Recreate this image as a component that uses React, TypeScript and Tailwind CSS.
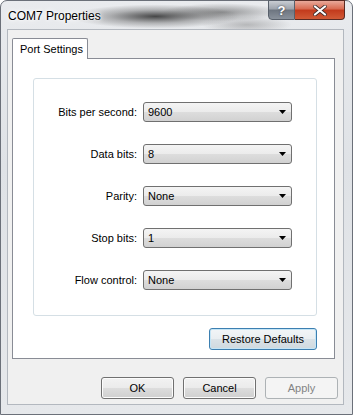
const rows = [
  { label: "Bits per second:", value: "9600" },
  { label: "Data bits:", value: "8" },
  { label: "Parity:", value: "None" },
  { label: "Stop bits:", value: "1" },
  { label: "Flow control:", value: "None" },
];

function Combo({ value }: { value: string }) {
  return (
    <div className="flex h-[20px] w-[149px] items-center justify-between rounded-[3px] border border-[#707070] bg-[linear-gradient(#f4f4f4,#ebebeb_50%,#dddddd_51%,#d1d1d1)] pl-[4px] pr-[5px]">
      <span className="text-[11px] leading-none text-black">{value}</span>
      <svg width="7" height="4" viewBox="0 0 7 4">
        <path d="M0 0h7L3.5 4z" fill="#000" />
      </svg>
    </div>
  );
}

function Btn({
  children,
  width,
  variant = "normal",
}: {
  children: React.ReactNode;
  width: string;
  variant?: "normal" | "default" | "disabled";
}) {
  const look =
    variant === "disabled"
      ? "border-[#adb2b5] bg-[#f4f4f4] text-[#838383]"
      : variant === "default"
        ? "border-[#3c7fb1] bg-[linear-gradient(#f2f5f7,#e9eef1_50%,#dae2e7_51%,#cfd9df)] text-black shadow-[inset_0_0_0_1px_#c4e5f6]"
        : "border-[#707070] bg-[linear-gradient(#f2f2f2,#ebebeb_50%,#dddddd_51%,#cfcfcf)] text-black shadow-[inset_0_0_0_1px_#fcfcfc]";
  return (
    <div
      className={`flex h-[22px] items-center justify-center rounded-[3px] border text-[11px] ${width} ${look}`}
    >
      {children}
    </div>
  );
}

export default function App() {
  return (
    <div className="h-[415px] w-[353px] overflow-hidden bg-white font-['Liberation_Sans',Arial,sans-serif]">
      <div className="flex h-[415px] w-[353px] flex-col rounded-t-[7px] border border-[#6b7079] bg-[linear-gradient(180deg,#e9ebee,#dfe2e6_40%,#e6e8eb)]">
        {/* title bar */}
        <div className="flex h-[28px] bg-[radial-gradient(ellipse_85px_12px_at_44%_55%,rgba(30,30,30,0.8),rgba(70,70,70,0.35)_55%,transparent),radial-gradient(ellipse_60px_9px_at_63%_40%,rgba(60,60,60,0.5),transparent),radial-gradient(ellipse_45px_9px_at_70%_85%,rgba(90,90,90,0.35),transparent)]">
          <div className="pl-[7px] pt-[9px] text-[12px] leading-none text-black [text-shadow:0_0_8px_#fff,0_0_4px_#fff,0_0_2px_#fff]">
            COM7 Properties
          </div>
          <div className="ml-auto mr-[7px] flex h-[20px] -translate-y-px">
            <div className="flex w-[27px] items-center justify-center rounded-bl-[4px] border border-[#58606b] bg-[linear-gradient(#c9cdd3,#9ca3ac_45%,#6d7580_50%,#8a929c)] text-[13px] font-bold leading-none text-white [text-shadow:0_0_2px_#333]">
              ?
            </div>
            <div className="flex w-[50px] items-center justify-center rounded-br-[4px] border border-l-0 border-[#5a2a22] bg-[linear-gradient(#e9a99a,#d8694f_45%,#c23a1c_50%,#d15a36)]">
              <svg width="14" height="11" viewBox="0 0 14 11">
                <path
                  d="M2 1.5l10 8M12 1.5l-10 8"
                  stroke="#3a2a2a"
                  strokeWidth="3.6"
                  strokeLinecap="round"
                />
                <path
                  d="M2 1.5l10 8M12 1.5l-10 8"
                  stroke="#fff"
                  strokeWidth="2.2"
                  strokeLinecap="round"
                />
              </svg>
            </div>
          </div>
        </div>

        {/* client area */}
        <div className="ml-[6px] mr-[8px] flex h-[376px] flex-col border border-[#b3b8bf] bg-[#f0f0f0] pl-[4px] pr-[8px] pt-[8px]">
          {/* tab strip */}
          <div className="flex">
            <div className="relative z-10 -mb-px flex h-[21px] w-[76px] items-center whitespace-nowrap rounded-t-[2px] border border-b-0 border-[#898c95] bg-white pl-[7px] text-[11px] text-black">
              Port Settings
            </div>
          </div>
          {/* pane */}
          <div className="flex h-[301px] flex-col border border-[#898c95] bg-white pl-[20px] pr-[17px] pt-[19px]">
            <div className="flex h-[238px] flex-col gap-[22px] rounded-[3px] border border-[#d5dfe5] pt-[23px]">
              {rows.map((r) => (
                <div key={r.label} className="flex items-center">
                  <div className="w-[109px] pr-[6px] text-right text-[11px] leading-none text-black">
                    {r.label}
                  </div>
                  <Combo value={r.value} />
                </div>
              ))}
            </div>
            <div className="mt-[12px] flex justify-end">
              <Btn width="w-[108px]" variant="default">
                Restore Defaults
              </Btn>
            </div>
          </div>
          {/* dialog buttons */}
          <div className="-mr-[3px] mt-[18px] flex justify-end gap-[9px]">
            <Btn width="w-[73px]">OK</Btn>
            <Btn width="w-[73px]">Cancel</Btn>
            <Btn width="w-[73px]" variant="disabled">
              Apply
            </Btn>
          </div>
        </div>
      </div>
    </div>
  );
}
